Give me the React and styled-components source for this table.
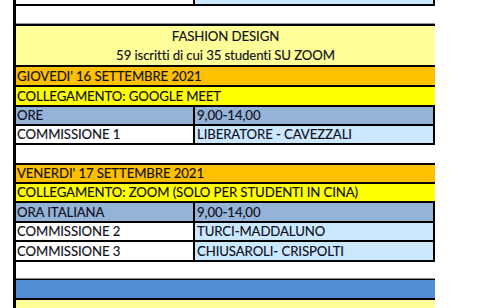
import React from "react";
import styled, { createGlobalStyle } from "styled-components";

const Global = createGlobalStyle`
  html, body { margin: 0; padding: 0; background: #ffffff; }
  body { font-family: Lato, "Liberation Sans", sans-serif; }
`;

const C = {
  paleYellow: "#ffff99",
  orange: "#ffc000",
  yellow: "#ffff00",
  steel: "#95b3d7",
  ice: "#cce8ff",
  blue: "#538dd5",
  ink: "#10101c",
};

const Sheet = styled.div`
  margin-left: 13px;
  width: 419px;
  border-left: 3px solid #000;
  display: flex;
  flex-direction: column;
  color: ${C.ink};
  font-size: 13.2px;
  letter-spacing: -0.1px;
  -webkit-text-stroke: 0.15px ${C.ink};
`;

const Line = styled.div`
  height: ${(p) => p.$h || 2}px;
  background: ${(p) => p.$c || "#000"};
`;

const Band = styled.div`
  height: ${(p) => p.$h}px;
  line-height: ${(p) => p.$h}px;
  background: ${(p) => p.$bg || "#fff"};
  padding-left: 1px;
  white-space: nowrap;
  overflow: hidden;
`;

const Header = styled.div`
  height: 39px;
  background: ${C.paleYellow};
  display: flex;
  flex-direction: column;
  justify-content: center;
  align-items: center;
  line-height: 19px;
`;

const Row = styled.div`
  display: grid;
  grid-template-columns: 179px 240px;
  height: ${(p) => p.$h}px;
  line-height: ${(p) => p.$h}px;
  overflow: hidden;
`;

const Cell = styled.div`
  background: ${(p) => p.$bg};
  border-right: 2px solid #000;
  padding-left: ${(p) => (p.$right ? 2 : 1)}px;
  white-space: nowrap;
  overflow: hidden;
`;

function Pair({ h, left, right, leftBg, rightBg }) {
  return (
    <Row $h={h}>
      <Cell $bg={leftBg}>{left}</Cell>
      <Cell $bg={rightBg} $right>
        {right}
      </Cell>
    </Row>
  );
}

export default function App() {
  return (
    <>
      <Global />
      <Sheet>
        <Pair h={4} left="" right="" leftBg="#fff" rightBg={C.ice} />
        <Line />
        <Band $h={17} />
        <Line $h={1} $c="#9a9a9a" />
        <Line />
        <Header>
          <div>FASHION DESIGN</div>
          <div>59 iscritti di cui 35 studenti SU ZOOM</div>
        </Header>
        <Line />
        <Band $h={18} $bg={C.orange}>GIOVEDI' 16 SETTEMBRE 2021</Band>
        <Line />
        <Band $h={18} $bg={C.yellow}>COLLEGAMENTO: GOOGLE MEET</Band>
        <Line />
        <Pair h={17} left="ORE" right="9,00-14,00" leftBg={C.steel} rightBg={C.steel} />
        <Line />
        <Pair h={17} left="COMMISSIONE 1" right="LIBERATORE - CAVEZZALI" leftBg="#fff" rightBg={C.ice} />
        <Line />
        <Band $h={18} />
        <Line />
        <Band $h={17} $bg={C.orange}>VENERDI' 17 SETTEMBRE 2021</Band>
        <Line />
        <Band $h={17} $bg={C.yellow}>COLLEGAMENTO: ZOOM (SOLO PER STUDENTI IN CINA)</Band>
        <Line />
        <Pair h={18} left="ORA ITALIANA" right="9,00-14,00" leftBg={C.steel} rightBg={C.steel} />
        <Line />
        <Pair h={17} left="COMMISSIONE 2" right="TURCI-MADDALUNO" leftBg="#fff" rightBg={C.ice} />
        <Line />
        <Pair h={18} left="COMMISSIONE 3" right="CHIUSAROLI- CRISPOLTI" leftBg="#fff" rightBg={C.ice} />
        <Line />
        <Band $h={16} />
        <Line $h={1} $c="#8a8a8a" />
        <Line $h={1} />
        <Band $h={18} $bg={C.blue} />
        <Line />
        <Band $h={20} $bg={C.paleYellow} />
      </Sheet>
    </>
  );
}
